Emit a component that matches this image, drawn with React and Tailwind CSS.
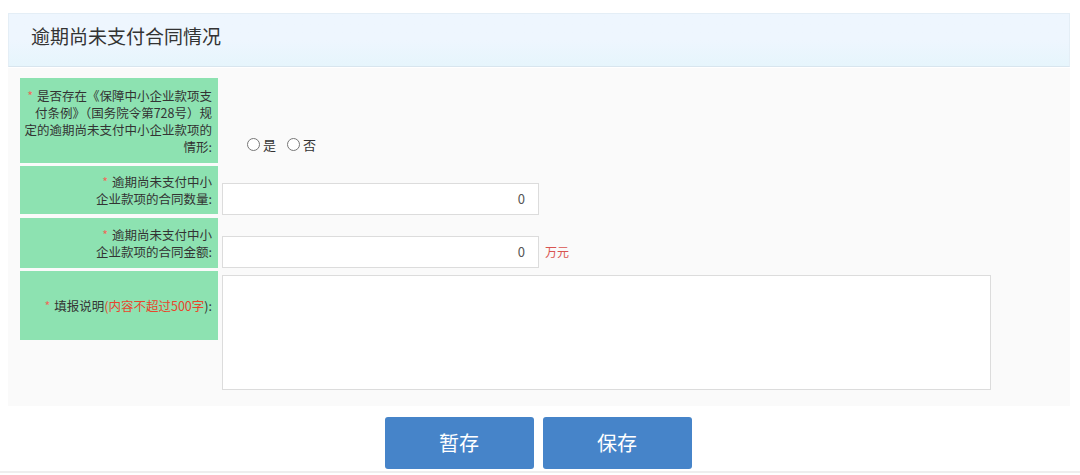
import React from 'react';

const font = { fontFamily: '"Noto Sans CJK SC", "Noto Sans", sans-serif' };

function Star() {
  return <span className="text-[#f06a5a] mr-[4px]">*</span>;
}

function Label({ h, children }) {
  return (
    <div
      className="self-start bg-[#8de2b1] flex items-center justify-end text-right pr-[6px] text-[12.5px] leading-[17px] text-[#333] whitespace-nowrap"
      style={{ height: h }}
    >
      <div>{children}</div>
    </div>
  );
}

function Radio({ label }) {
  return (
    <label className="flex items-center gap-[3px]">
      <span className="w-[13px] h-[13px] rounded-full border border-[#777] bg-white" />
      <span>{label}</span>
    </label>
  );
}

function NumInput() {
  return (
    <div className="w-[317px] h-[32px] bg-white border border-[#dcdcdc] flex items-center justify-end pr-[13px] text-[13px] text-[#555]">
      0
    </div>
  );
}

export default function App() {
  return (
    <div className="w-[1080px] h-[475px] bg-white overflow-hidden pt-[13px]" style={font}>
      <div className="mx-[8px] w-[1062px]">
        {/* 标题 */}
        <div className="h-[54px] bg-gradient-to-b from-[#eef6fe] via-[#eef6fe] to-[#e6f5fc] border border-[#e4eef6] border-b-[#d8e5ee] pl-[22px] pt-[8px] text-[19px] text-[#333]">
          逾期尚未支付合同情况
        </div>

        {/* 表单 */}
        <div className="bg-[#fafafa] mt-[1px] pt-[10px] pb-[16px] pl-[12px]">
          <div className="grid grid-cols-[198px_1fr] gap-x-[4px] gap-y-[3px]">
            <Label h={85}>
              <Star />是否存在《保障中小企业款项支<br />
              付条例》（国务院令第728号）规<br />
              定的逾期尚未支付中小企业款项的<br />
              情形:
            </Label>
            <div className="self-end pb-[9px] pl-[25px] flex items-center gap-[11px] text-[13px] text-[#333]">
              <Radio label="是" />
              <Radio label="否" />
            </div>

            <Label h={48}>
              <Star />逾期尚未支付中小<br />
              企业款项的合同数量:
            </Label>
            <div className="pt-[17px]">
              <NumInput />
            </div>

            <Label h={50}>
              <Star />逾期尚未支付中小<br />
              企业款项的合同金额:
            </Label>
            <div className="pt-[18px] flex items-center gap-[6px]">
              <NumInput />
              <span className="text-[12px] text-[#d9534f]">万元</span>
            </div>

            <Label h={69}>
              <Star />填报说明<span className="text-[#e8452c]">(内容不超过500字</span>):
            </Label>
            <div className="pt-[4px]">
              <div className="w-[769px] h-[115px] bg-white border border-[#dcdcdc]" />
            </div>
          </div>
        </div>
      </div>

      {/* 按钮 */}
      <div className="mt-[11px] flex justify-center gap-[9px] pr-[4px]">
        <button className="w-[149px] h-[52px] rounded-[3px] bg-[#4684c9] text-white text-[20px]">暂存</button>
        <button className="w-[149px] h-[52px] rounded-[3px] bg-[#4684c9] text-white text-[20px]">保存</button>
      </div>
      <div className="mt-[2px] h-[2px] bg-[#eeeeee]" />
    </div>
  );
}
